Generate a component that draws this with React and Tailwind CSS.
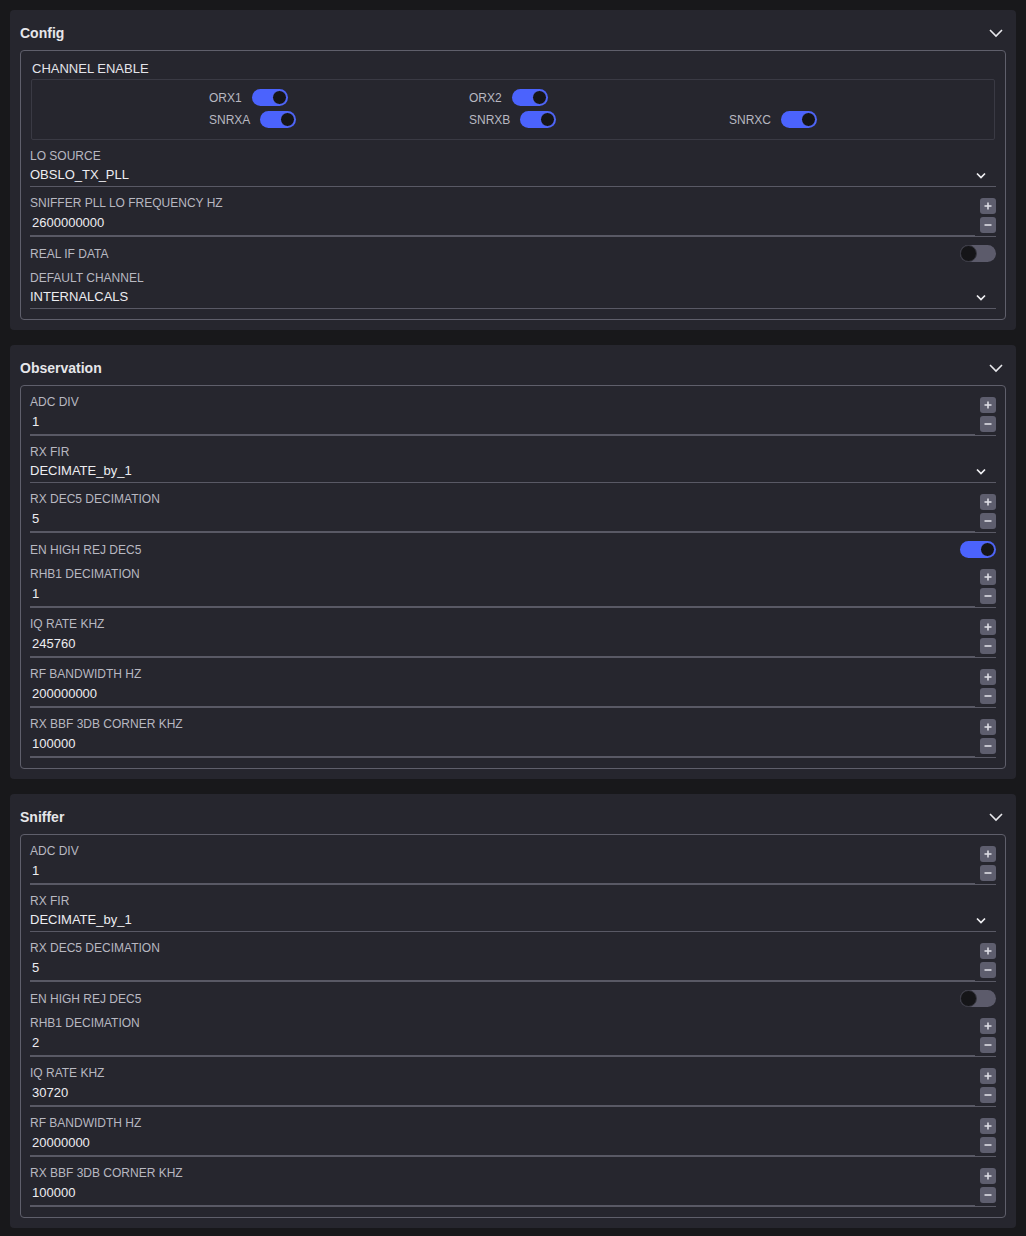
import React from "react";

const font = "font-['Liberation_Sans',Arial,sans-serif]";

function Chevron({ className = "" }) {
  return (
    <svg width="16" height="10" viewBox="0 0 16 10" className={className}>
      <polyline points="2,2 8,8 14,2" fill="none" stroke="#e8e8ec" strokeWidth="1.6" />
    </svg>
  );
}

function SmallChevron() {
  return (
    <svg width="10" height="7" viewBox="0 0 10 7" className="mr-[10px]">
      <polyline points="1,1.5 5,5.5 9,1.5" fill="none" stroke="#f0f0f4" strokeWidth="1.7" />
    </svg>
  );
}

function Toggle({ on }) {
  return (
    <div
      className={
        on
          ? "w-[36px] h-[17px] rounded-full bg-[#4b63fd] flex justify-end items-center p-[1px]"
          : "w-[36px] h-[17px] rounded-full bg-[#5c5b6b] flex justify-start items-center"
      }
    >
      <div
        className={
          on
            ? "w-[15px] h-[15px] rounded-full bg-[#151518] border border-[#5a70ff]"
            : "w-[17px] h-[17px] rounded-full bg-[#151518] border border-[#3a3a44]"
        }
      />
    </div>
  );
}

function Label({ children }) {
  return <div className="text-[12px] leading-4 text-[#b8b8c1]">{children}</div>;
}

function SelectField({ label, value }) {
  return (
    <div>
      <Label>{label}</Label>
      <div className="flex items-center justify-between h-[23px] border-b border-[#595965]">
        <span className="text-[13px] text-[#ededf1]">{value}</span>
        <SmallChevron />
      </div>
    </div>
  );
}

function StepButton({ minus }) {
  return (
    <div className="w-4 h-4 rounded-[3px] bg-[#5e5e6e] flex items-center justify-center">
      <svg width="10" height="10" viewBox="0 0 10 10">
        <line x1="1.5" y1="5" x2="8.5" y2="5" stroke="#dcdce4" strokeWidth="1.6" />
        {!minus && <line x1="5" y1="1.5" x2="5" y2="8.5" stroke="#dcdce4" strokeWidth="1.6" />}
      </svg>
    </div>
  );
}

function NumberField({ label, value }) {
  return (
    <div className="flex border-b border-[#595965]">
      <div className="flex-1">
        <Label>{label}</Label>
        <div className="h-[25px] border-b border-[#595965] flex items-center pl-[2px] text-[13px] text-[#ededf1]">
          {value}
        </div>
      </div>
      <div className="w-[21px] flex flex-col items-end pt-[3px] gap-[3px]">
        <StepButton />
        <StepButton minus />
      </div>
    </div>
  );
}

function ToggleField({ label, on }) {
  return (
    <div className="flex items-center justify-between h-[17px]">
      <Label>{label}</Label>
      <Toggle on={on} />
    </div>
  );
}

function Card({ title, children }) {
  return (
    <div className="bg-[#26262e] rounded-[4px] px-[10px] pt-3 pb-[10px]">
      <div className="flex items-center justify-between h-[22px] mb-[6px]">
        <span className="text-[14px] font-bold text-[#e6e6ea]">{title}</span>
        <Chevron className="mr-[2px]" />
      </div>
      <div className="border border-[#5f5f6b] rounded-[4px] px-[9px] pt-[8px] pb-[10px] flex flex-col gap-2">
        {children}
      </div>
    </div>
  );
}

function Channel({ name, on }) {
  return (
    <div className="flex items-center gap-[10px] h-[17px]">
      <span className="text-[12px] text-[#b8b8c1]">{name}</span>
      <Toggle on={on} />
    </div>
  );
}

function RxSection({ values }) {
  return (
    <>
      <NumberField label="ADC DIV" value="1" />
      <SelectField label="RX FIR" value="DECIMATE_by_1" />
      <NumberField label="RX DEC5 DECIMATION" value="5" />
      <ToggleField label="EN HIGH REJ DEC5" on={values.highRej} />
      <NumberField label="RHB1 DECIMATION" value={values.rhb1} />
      <NumberField label="IQ RATE KHZ" value={values.iq} />
      <NumberField label="RF BANDWIDTH HZ" value={values.rf} />
      <NumberField label="RX BBF 3DB CORNER KHZ" value="100000" />
    </>
  );
}

export default function App() {
  return (
    <div className={`${font} min-h-screen bg-[#18181b] p-[10px] flex flex-col gap-[15px]`}>
      <Card title="Config">
        <div>
          <div className="text-[13px] leading-[20px] pl-[2px] text-[#e4e4ea]">CHANNEL ENABLE</div>
          <div className="mx-[1px] border border-[#3a3a44] rounded-[2px] pt-[9px] pb-[11px] pl-[177px] grid grid-cols-[260px_260px_260px] gap-y-[5px]">
            <Channel name="ORX1" on />
            <Channel name="ORX2" on />
            <div />
            <Channel name="SNRXA" on />
            <Channel name="SNRXB" on />
            <Channel name="SNRXC" on />
          </div>
        </div>
        <SelectField label="LO SOURCE" value="OBSLO_TX_PLL" />
        <NumberField label="SNIFFER PLL LO FREQUENCY HZ" value="2600000000" />
        <ToggleField label="REAL IF DATA" on={false} />
        <SelectField label="DEFAULT CHANNEL" value="INTERNALCALS" />
      </Card>

      <Card title="Observation">
        <RxSection values={{ highRej: true, rhb1: "1", iq: "245760", rf: "200000000" }} />
      </Card>

      <Card title="Sniffer">
        <RxSection values={{ highRej: false, rhb1: "2", iq: "30720", rf: "20000000" }} />
      </Card>
    </div>
  );
}
